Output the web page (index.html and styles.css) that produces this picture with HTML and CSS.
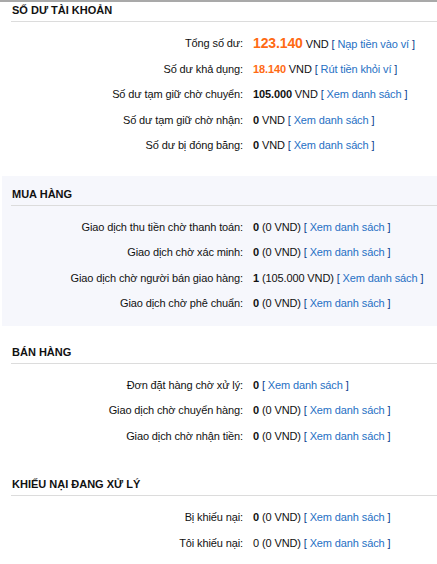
FILE: index.html
```html
<!DOCTYPE html>
<html lang="vi">
<head>
<meta charset="utf-8">
<title>Số dư tài khoản</title>
<link rel="stylesheet" href="styles.css">
</head>
<body>
<div class="page">
  <section class="box">
    <h2 class="box-title">SỐ DƯ TÀI KHOẢN</h2>
    <div class="rows">
      <div class="label">Tổng số dư:</div>
      <div class="value"><b class="big">123.140</b> VND <span class="br">[</span> <a href="#">Nạp tiền vào ví</a> <span class="br">]</span></div>
      <div class="label">Số dư khả dụng:</div>
      <div class="value"><b class="orange">18.140</b> VND <span class="br">[</span> <a href="#">Rút tiền khỏi ví</a> <span class="br">]</span></div>
      <div class="label">Số dư tạm giữ chờ chuyển:</div>
      <div class="value"><b>105.000</b> VND <span class="br">[</span> <a href="#">Xem danh sách</a> <span class="br">]</span></div>
      <div class="label">Số dư tạm giữ chờ nhận:</div>
      <div class="value"><b>0</b> VND <span class="br">[</span> <a href="#">Xem danh sách</a> <span class="br">]</span></div>
      <div class="label">Số dư bị đóng băng:</div>
      <div class="value"><b>0</b> VND <span class="br">[</span> <a href="#">Xem danh sách</a> <span class="br">]</span></div>
    </div>
  </section>

  <section class="box shaded">
    <h2 class="box-title">MUA HÀNG</h2>
    <div class="rows">
      <div class="label">Giao dịch thu tiền chờ thanh toán:</div>
      <div class="value"><b>0</b> (0 VND) <span class="br">[</span> <a href="#">Xem danh sách</a> <span class="br">]</span></div>
      <div class="label">Giao dịch chờ xác minh:</div>
      <div class="value"><b>0</b> (0 VND) <span class="br">[</span> <a href="#">Xem danh sách</a> <span class="br">]</span></div>
      <div class="label">Giao dịch chờ người bán giao hàng:</div>
      <div class="value"><b>1</b> (105.000 VND) <span class="br">[</span> <a href="#">Xem danh sách</a> <span class="br">]</span></div>
      <div class="label">Giao dịch chờ phê chuẩn:</div>
      <div class="value"><b>0</b> (0 VND) <span class="br">[</span> <a href="#">Xem danh sách</a> <span class="br">]</span></div>
    </div>
  </section>

  <section class="box">
    <h2 class="box-title">BÁN HÀNG</h2>
    <div class="rows">
      <div class="label">Đơn đặt hàng chờ xử lý:</div>
      <div class="value"><b>0</b> <span class="br">[</span> <a href="#">Xem danh sách</a> <span class="br">]</span></div>
      <div class="label">Giao dịch chờ chuyển hàng:</div>
      <div class="value"><b>0</b> (0 VND) <span class="br">[</span> <a href="#">Xem danh sách</a> <span class="br">]</span></div>
      <div class="label">Giao dịch chờ nhận tiền:</div>
      <div class="value"><b>0</b> (0 VND) <span class="br">[</span> <a href="#">Xem danh sách</a> <span class="br">]</span></div>
    </div>
  </section>

  <section class="box">
    <h2 class="box-title">KHIẾU NẠI ĐANG XỬ LÝ</h2>
    <div class="rows">
      <div class="label">Bị khiếu nại:</div>
      <div class="value"><b>0</b> (0 VND) <span class="br">[</span> <a href="#">Xem danh sách</a> <span class="br">]</span></div>
      <div class="label">Tôi khiếu nại:</div>
      <div class="value">0 (0 VND) <span class="br">[</span> <a href="#">Xem danh sách</a> <span class="br">]</span></div>
    </div>
  </section>
</div>
</body>
</html>
```

FILE: styles.css
```css
html, body {
  margin: 0;
  padding: 0;
  background: #ffffff;
}

body {
  font-family: "Liberation Sans", Arial, sans-serif;
  font-size: 11px;
  letter-spacing: -0.12px;
  color: #111111;
}

.page {
  border-top: 2px solid #a9a9a9;
  padding-left: 2px;
}

.box {
  margin-top: 8px;
  padding: 10px 0 9px 9px;
}

.box:first-child {
  margin-top: 0;
  padding-top: 0;
}

.shaded {
  background: #f6f7fc;
}

.box-title {
  margin: 0;
  padding: 0 0 3px 1px;
  font-size: 11px;
  line-height: 16px;
  letter-spacing: 0;
  font-weight: bold;
  color: #111111;
  border-bottom: 1px solid #dcdcdc;
}

.rows {
  margin-top: 9px;
  display: grid;
  grid-template-columns: 232px 1fr;
  column-gap: 10px;
}

.label,
.value {
  height: 25.5px;
  line-height: 25.5px;
  white-space: nowrap;
}

.label {
  text-align: right;
}

.value b {
  font-weight: bold;
}

.big {
  font-size: 14px;
  color: #ff6a13;
}

.orange {
  color: #ff6a13;
}

.br {
  color: #0d3f8f;
}

a {
  color: #2670c4;
  text-decoration: none;
}
```
